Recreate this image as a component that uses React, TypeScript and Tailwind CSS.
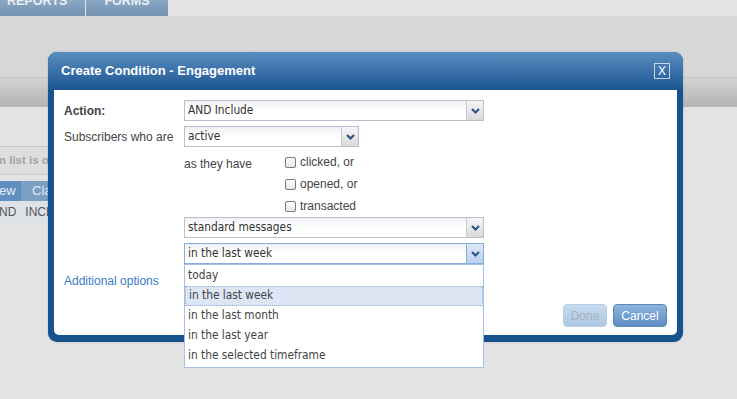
import React from "react";

const Chevron = ({ active = false }: { active?: boolean }) => (
  <div
    className={`flex w-[17px] shrink-0 items-center justify-center border-l ${
      active
        ? "border-[#88aee0] bg-gradient-to-b from-[#dce8f7] to-[#bcd2ee]"
        : "border-[#c7cbd3] bg-gradient-to-b from-[#f6f6f6] to-[#dadada]"
    }`}
  >
    <svg width="9" height="6" viewBox="0 0 9 6">
      <path d="M1 1 L4.5 4.5 L8 1" stroke="#27508c" strokeWidth="2" fill="none" />
    </svg>
  </div>
);

const Select = ({
  value,
  width,
  active = false,
}: {
  value: string;
  width: string;
  active?: boolean;
}) => (
  <div
    className={`flex h-[21px] ${width} border ${
      active ? "border-[#88aee0]" : "border-[#b9bfcc]"
    } bg-gradient-to-b from-[#eef0f2] via-white to-white`}
  >
    <div className="flex flex-1 items-center pl-[3px] text-[11.8px] text-[#333] [font-family:'DejaVu_Sans_Condensed','DejaVu_Sans',sans-serif]">
      {value}
    </div>
    <Chevron active={active} />
  </div>
);

const Check = ({ label }: { label: string }) => (
  <div className="flex h-[22px] items-center gap-[4px]">
    <div className="h-[11px] w-[11px] rounded-[2px] border border-[#7a7a7a] bg-gradient-to-b from-white to-[#e6e6e6]" />
    <span>{label}</span>
  </div>
);

export default function App() {
  const options = [
    "today",
    "in the last week",
    "in the last month",
    "in the last year",
    "in the selected timeframe",
  ];
  return (
    <div className="relative h-[399px] w-[737px] overflow-hidden bg-[#e3e3e3] [font-family:'Liberation_Sans',Arial,sans-serif]">
      {/* top tabs */}
      <div className="flex h-[16px]">
        <div className="flex w-[85px] justify-start overflow-hidden bg-gradient-to-b from-[#8aa7c3] to-[#7492b2] pl-[7px]">
          <span className="-mt-[7px] text-[12.5px] font-bold leading-[16px] text-[#e9eef4]">REPORTS</span>
        </div>
        <div className="w-px bg-[#dfe6ee]" />
        <div className="flex w-[82px] justify-center overflow-hidden bg-gradient-to-b from-[#8aa7c3] to-[#7492b2]">
          <span className="-mt-[7px] text-[12.5px] font-bold leading-[16px] text-[#e9eef4]">FORMS</span>
        </div>
        <div className="flex-1 bg-[#e3e3e3]" />
      </div>
      <div className="h-[61px] bg-[#d6d7d8]" />
      <div className="h-px bg-[#c6c6c6]" />
      <div className="h-[29px] bg-gradient-to-b from-[#d3d3d3] to-[#b3b3b3]" />
      <div className="h-[39px]" />
      <div className="flex h-[29px] w-[200px] items-center overflow-hidden border-y border-[#c9c9c9] bg-[#dedede]">
        <span className="-ml-[1px] whitespace-nowrap text-[11.5px] font-bold text-[#a2a2a2]">n list is on</span>
      </div>
      <div className="h-[6px]" />
      <div className="flex h-[20px] w-[200px] text-[13px]">
        <div className="flex w-[21px] items-center overflow-hidden bg-[#5f90c1]">
          <span className="-ml-[1px] text-[#e4edf6]">ew</span>
        </div>
        <div className="flex flex-1 items-center bg-[#7b9ec2] pl-[11px]">
          <span className="text-[#e4edf6]">Clas</span>
        </div>
      </div>
      <div className="flex h-[22px] w-[200px] items-center gap-[9px] bg-[#dde2e7] text-[12px] text-[#555]">
        <span className="-ml-[1px]">ND</span>
        <span>INCL</span>
      </div>

      {/* dialog */}
      <div className="absolute left-[48px] top-[52px] flex h-[290px] w-[635px] flex-col overflow-hidden rounded-[9px] bg-[#17548f] shadow-[0_0_2px_rgba(0,0,0,0.2)]">
        <div className="flex h-[38px] shrink-0 items-center justify-between bg-gradient-to-b from-[#5a8ec1] to-[#1a5592] pl-[13px] pr-[13px]">
          <span className="text-[13px] font-bold text-white">Create Condition - Engagement</span>
          <div className="flex h-[16px] w-[16px] items-center justify-center border border-[#c5d6e9] text-[12px] leading-none text-white">
            X
          </div>
        </div>
        <div className="mx-[6px] mb-[7px] flex flex-1 flex-col rounded-b-[5px] bg-white pl-[10px] pr-[10px] text-[12px] text-[#444]">
          <div className="mt-[10px] flex h-[21px] items-center">
            <span className="w-[120px] font-bold">Action:</span>
            <Select value="AND Include" width="w-[300px]" />
          </div>
          <div className="mt-[5px] flex h-[21px] items-center">
            <span className="w-[120px]">Subscribers who are</span>
            <Select value="active" width="w-[175px]" />
          </div>
          <div className="mt-[4px] flex pl-[120px]">
            <span className="w-[101px] pt-[4px]">as they have</span>
            <div className="flex flex-col">
              <Check label="clicked, or" />
              <Check label="opened, or" />
              <Check label="transacted" />
            </div>
          </div>
          <div className="pl-[120px]">
            <Select value="standard messages" width="w-[300px]" />
          </div>
          <div className="mt-[5px] pl-[120px]">
            <Select value="in the last week" width="w-[300px]" active />
          </div>
          <div className="mt-[8px] text-[12px] text-[#3a7bc2]">Additional options</div>
          <div className="mt-[14px] flex justify-end gap-[6px]">
            <div className="flex h-[23px] w-[44px] items-center justify-center rounded-[4px] border border-[#b6cde6] bg-gradient-to-b from-[#c8dbef] to-[#adc8e4] text-[12px] text-[#a3b2c1]">
              Done
            </div>
            <div className="flex h-[23px] w-[54px] items-center justify-center rounded-[4px] border border-[#5d89b9] bg-gradient-to-b from-[#8db5de] to-[#5c8dc4] text-[12px] text-white">
              Cancel
            </div>
          </div>
        </div>
      </div>

      {/* open dropdown list */}
      <div className="absolute left-[184px] top-[264px] w-[300px] border border-[#a4c1e8] bg-white py-px text-[11.8px] text-[#444] [font-family:'DejaVu_Sans_Condensed','DejaVu_Sans',sans-serif]">
        {options.map((o) => (
          <div
            key={o}
            className={`flex h-[20px] items-center pl-[3px] ${
              o === "in the last week" ? "border border-dotted border-[#8aa9d6] bg-[#dde6f5] pl-[2px]" : ""
            }`}
          >
            {o}
          </div>
        ))}
      </div>
    </div>
  );
}
